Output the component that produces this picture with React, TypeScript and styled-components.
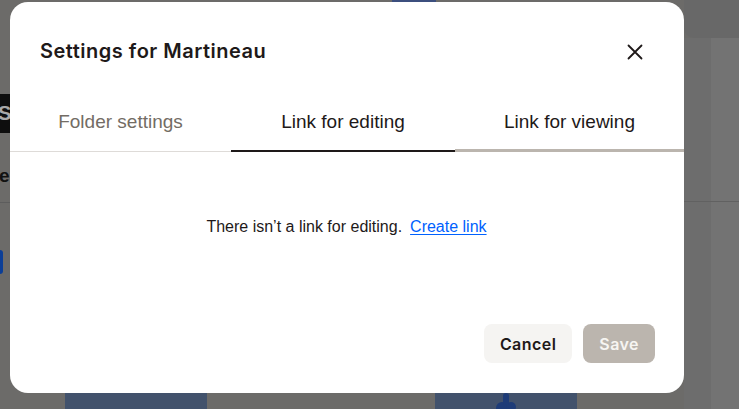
import React from "react";
import styled, { createGlobalStyle } from "styled-components";

const Global = createGlobalStyle`
  html, body { margin: 0; padding: 0; }
  body { font-family: "Liberation Sans", Arial, sans-serif; background: #6c6b69; overflow: hidden; }
  * { box-sizing: border-box; }
`;

const Page = styled.div`
  position: relative;
  width: 739px;
  height: 409px;
  overflow: hidden;
  display: flex;
  background: #6c6b69;
`;

const LeftRail = styled.div`
  width: 10px;
  display: flex;
  flex-direction: column;
  padding-top: 94px;
`;

const Chip = styled.div`
  height: 39px;
  width: 10px;
  background: #0e0e0e;
  color: #a9a9a9;
  font: 700 20px "Liberation Sans", Arial, sans-serif;
  line-height: 39px;
  overflow: hidden;
  text-indent: -2px;
`;

const RailLetter = styled.div`
  margin-top: 30px;
  height: 26px;
  width: 10px;
  overflow: hidden;
  color: #121212;
  font: 700 19px "Liberation Sans", Arial, sans-serif;
  line-height: 26px;
  text-indent: -1px;
`;

const RailLine = styled.div<{ $tone: string; $top: number }>`
  height: 1px;
  margin-top: ${(p) => p.$top}px;
  background: ${(p) => p.$tone};
`;

const RailButton = styled.div`
  margin-top: 47px;
  width: 3px;
  height: 24px;
  border-radius: 0 4px 4px 0;
  background: #0b3e97;
`;

const MainBg = styled.div`
  flex: 1;
  display: flex;
  flex-direction: column;
  justify-content: space-between;
`;

const TopStrip = styled.div`
  height: 2px;
  display: flex;
  padding-left: 382px;
`;

const TopBlue = styled.div`
  width: 44px;
  height: 2px;
  background: #3c4f7e;
`;

const BottomCards = styled.div`
  height: 16px;
  display: flex;
  gap: 228px;
  padding-left: 55px;
`;

const BgCard = styled.div`
  width: 142px;
  height: 16px;
  background: #42526c;
  overflow: hidden;
  display: flex;
  justify-content: center;
`;

const RightRail = styled.div`
  width: 55px;
  display: flex;
  flex-direction: column;
`;

const RightTop = styled.div`
  height: 38px;
  background: #686868;
  border-bottom-left-radius: 10px;
`;

const RightBody = styled.div`
  flex: 1;
  display: flex;
  flex-direction: column;
  background: linear-gradient(to right, #6d6d6d 0 27px, #737373 27px);
`;

const Overlay = styled.div`
  position: absolute;
  inset: 0;
  display: flex;
  align-items: flex-start;
  padding: 2px 0 0 10px;
`;

const Modal = styled.div`
  width: 674px;
  height: 391px;
  background: #ffffff;
  border-radius: 18px;
  display: flex;
  flex-direction: column;
  overflow: hidden;
`;

const Header = styled.div`
  height: 98px;
  display: flex;
  align-items: flex-start;
  justify-content: space-between;
  padding: 35px 33px 0 30px;
`;

const Title = styled.h2`
  margin: 0;
  font: 600 20px Inter, "Open Sans", sans-serif;
  line-height: 28px;
  color: #1e1919;
  letter-spacing: 0.5px;
`;

const CloseButton = styled.button`
  width: 32px;
  height: 32px;
  margin-top: -1px;
  border: none;
  background: transparent;
  padding: 0;
  display: flex;
  align-items: center;
  justify-content: center;
  cursor: pointer;
`;

const TabRow = styled.div`
  display: grid;
  grid-template-columns: 221px 224px 1fr;
  height: 52px;
`;

const Tab = styled.div<{ $muted?: boolean; $line: string; $thick: number }>`
  display: flex;
  align-items: center;
  justify-content: center;
  padding-bottom: 8px;
  font: 400 19px "Liberation Sans", Arial, sans-serif;
  color: ${(p) => (p.$muted ? "#736c64" : "#1e1919")};
  box-shadow: inset 0 -${(p) => p.$thick}px 0 ${(p) => p.$line};
`;

const Content = styled.div`
  flex: 1;
  display: flex;
  justify-content: center;
  align-items: flex-start;
  padding-top: 64px;
  padding-right: 1px;
`;

const Message = styled.p`
  margin: 0;
  font: 400 16px "Liberation Sans", Arial, sans-serif;
  line-height: 22px;
  color: #1e1919;
  display: flex;
  gap: 8px;
`;

const Link = styled.a`
  color: #0061fe;
  text-decoration: underline;
  text-underline-offset: 2px;
  cursor: pointer;
`;

const Footer = styled.div`
  display: flex;
  justify-content: flex-end;
  gap: 11px;
  padding: 0 29px 30px 0;
`;

const Button = styled.button<{ $primary?: boolean }>`
  height: 39px;
  padding: 0 16px;
  border: none;
  border-radius: 8px;
  font: 600 16px Inter, "Open Sans", sans-serif;
  letter-spacing: 0.45px;
  background: ${(p) => (p.$primary ? "#bbb5ae" : "#f5f4f2")};
  color: ${(p) => (p.$primary ? "#f7f5f2" : "#1e1919")};
  cursor: pointer;
`;

export default function App() {
  return (
    <>
      <Global />
      <Page>
        <LeftRail>
          <Chip>S</Chip>
          <RailLetter>e</RailLetter>
          <RailLine $tone="#5d5d5d" $top={13} />
          <RailButton />
        </LeftRail>
        <MainBg>
          <TopStrip>
            <TopBlue />
          </TopStrip>
          <BottomCards>
            <BgCard />
            <BgCard>
              <svg width="30" height="16" viewBox="0 0 30 16">
                <circle cx="11" cy="15" r="6" fill="#1e3c78" />
                <circle cx="20" cy="14" r="5" fill="#1e3c78" />
                <rect x="12" y="0" width="6" height="12" rx="3" fill="#1e3c78" />
              </svg>
            </BgCard>
          </BottomCards>
        </MainBg>
        <RightRail>
          <RightTop />
          <RightBody>
            <RailLine $tone="#616161" $top={163} />
          </RightBody>
        </RightRail>
        <Overlay>
          <Modal role="dialog" aria-label="Settings for Martineau">
            <Header>
              <Title>Settings for Martineau</Title>
              <CloseButton aria-label="Close">
                <svg width="16" height="16" viewBox="0 0 16 16">
                  <path d="M1.5 1.5 L14.5 14.5 M14.5 1.5 L1.5 14.5" stroke="#1e1919" strokeWidth="1.8" strokeLinecap="round" />
                </svg>
              </CloseButton>
            </Header>
            <TabRow>
              <Tab $muted $line="#dedbd8" $thick={1}>Folder settings</Tab>
              <Tab $line="#1e1919" $thick={2}>Link for editing</Tab>
              <Tab $line="#bbb5ae" $thick={3}>Link for viewing</Tab>
            </TabRow>
            <Content>
              <Message>
                <span>There isn’t a link for editing.</span>
                <Link>Create link</Link>
              </Message>
            </Content>
            <Footer>
              <Button>Cancel</Button>
              <Button $primary>Save</Button>
            </Footer>
          </Modal>
        </Overlay>
      </Page>
    </>
  );
}
